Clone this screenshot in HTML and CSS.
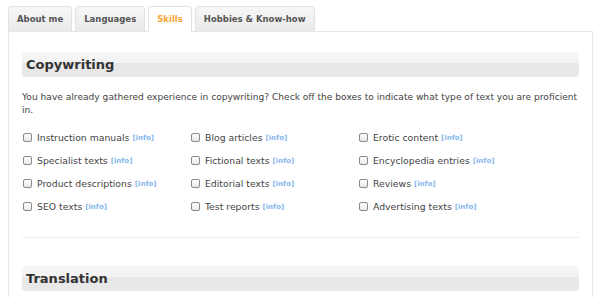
FILE: index.html
```html
<!DOCTYPE html>
<html lang="en">
<head>
    <meta charset="UTF-8">
    <title>Profile - Skills</title>
    <link rel="stylesheet" href="styles.css">
</head>
<body>
    <div class="page">
        <ul class="tabs">
            <li class="tab">About me</li>
            <li class="tab">Languages</li>
            <li class="tab active">Skills</li>
            <li class="tab">Hobbies &amp; Know-how</li>
        </ul>

        <div class="panel">
            <h3 class="section-title">Copywriting</h3>
            <p class="intro">You have already gathered experience in copywriting? Check off the boxes to indicate what type of text you are proficient in.</p>

            <div class="skill-grid">
                <label class="skill"><input type="checkbox"> Instruction manuals <a class="info">[info]</a></label>
                <label class="skill"><input type="checkbox"> Blog articles <a class="info">[info]</a></label>
                <label class="skill"><input type="checkbox"> Erotic content <a class="info">[info]</a></label>

                <label class="skill"><input type="checkbox"> Specialist texts <a class="info">[info]</a></label>
                <label class="skill"><input type="checkbox"> Fictional texts <a class="info">[info]</a></label>
                <label class="skill"><input type="checkbox"> Encyclopedia entries <a class="info">[info]</a></label>

                <label class="skill"><input type="checkbox"> Product descriptions <a class="info">[info]</a></label>
                <label class="skill"><input type="checkbox"> Editorial texts <a class="info">[info]</a></label>
                <label class="skill"><input type="checkbox"> Reviews <a class="info">[info]</a></label>

                <label class="skill"><input type="checkbox"> SEO texts <a class="info">[info]</a></label>
                <label class="skill"><input type="checkbox"> Test reports <a class="info">[info]</a></label>
                <label class="skill"><input type="checkbox"> Advertising texts <a class="info">[info]</a></label>
            </div>

            <hr class="divider">

            <h3 class="section-title">Translation</h3>
        </div>
    </div>
</body>
</html>
```

FILE: styles.css
```css
body, html {
    margin: 0;
    padding: 0;
    background-color: #fff;
    font-family: "DejaVu Sans", Verdana, sans-serif;
    color: #444;
    overflow: hidden;
}
.page {
    padding: 6px 7px 0 8px;
}
.tabs {
    display: flex;
    gap: 3px;
    list-style: none;
    margin: 0;
    padding: 0;
    position: relative;
    z-index: 1;
}
.tab {
    height: 24px;
    line-height: 24px;
    padding: 0 8px;
    font-size: 8.5px;
    font-weight: bold;
    color: #555;
    border: 1px solid #e2e2e2;
    border-bottom: none;
    border-radius: 4px 4px 0 0;
    background: linear-gradient(#f7f7f7, #e9e9e9);
}
.tab.active {
    background: #fff;
    color: #f7a735;
    height: 25px;
    margin-bottom: -1px;
}
.panel {
    border: 1px solid #e6e6e6;
    border-bottom: none;
    padding: 20px 13px 0 13px;
    height: 266px;
    box-sizing: border-box;
}
.section-title {
    margin: 0;
    height: 25px;
    line-height: 25px;
    padding-left: 4px;
    font-size: 13px;
    font-weight: bold;
    color: #333;
    border-radius: 3px;
    background: linear-gradient(#f6f6f6 0%, #f3f3f3 45%, #e8e8e8 45%, #e8e8e8 100%);
}
.intro {
    margin: 14px 0 9px 0;
    font-size: 9.1px;
    line-height: 13px;
}
.skill-grid {
    display: grid;
    grid-template-columns: 168px 168px 168px;
    grid-auto-rows: 23px;
}
.skill {
    display: flex;
    align-items: center;
    gap: 4px;
    font-size: 9.3px;
    white-space: nowrap;
}
.skill input {
    appearance: none;
    -webkit-appearance: none;
    width: 9px;
    height: 9px;
    margin: 0 1px 0 1px;
    border: 1px solid #8a8a8a;
    border-radius: 2px;
    background: linear-gradient(#fff, #e8e8e8);
}
.info {
    font-size: 7px;
    font-weight: bold;
    color: #86b6ee;
    margin-left: -1px;
}
.divider {
    border: none;
    border-top: 1px solid #eee;
    margin: 19px 0 28px 0;
}
```
